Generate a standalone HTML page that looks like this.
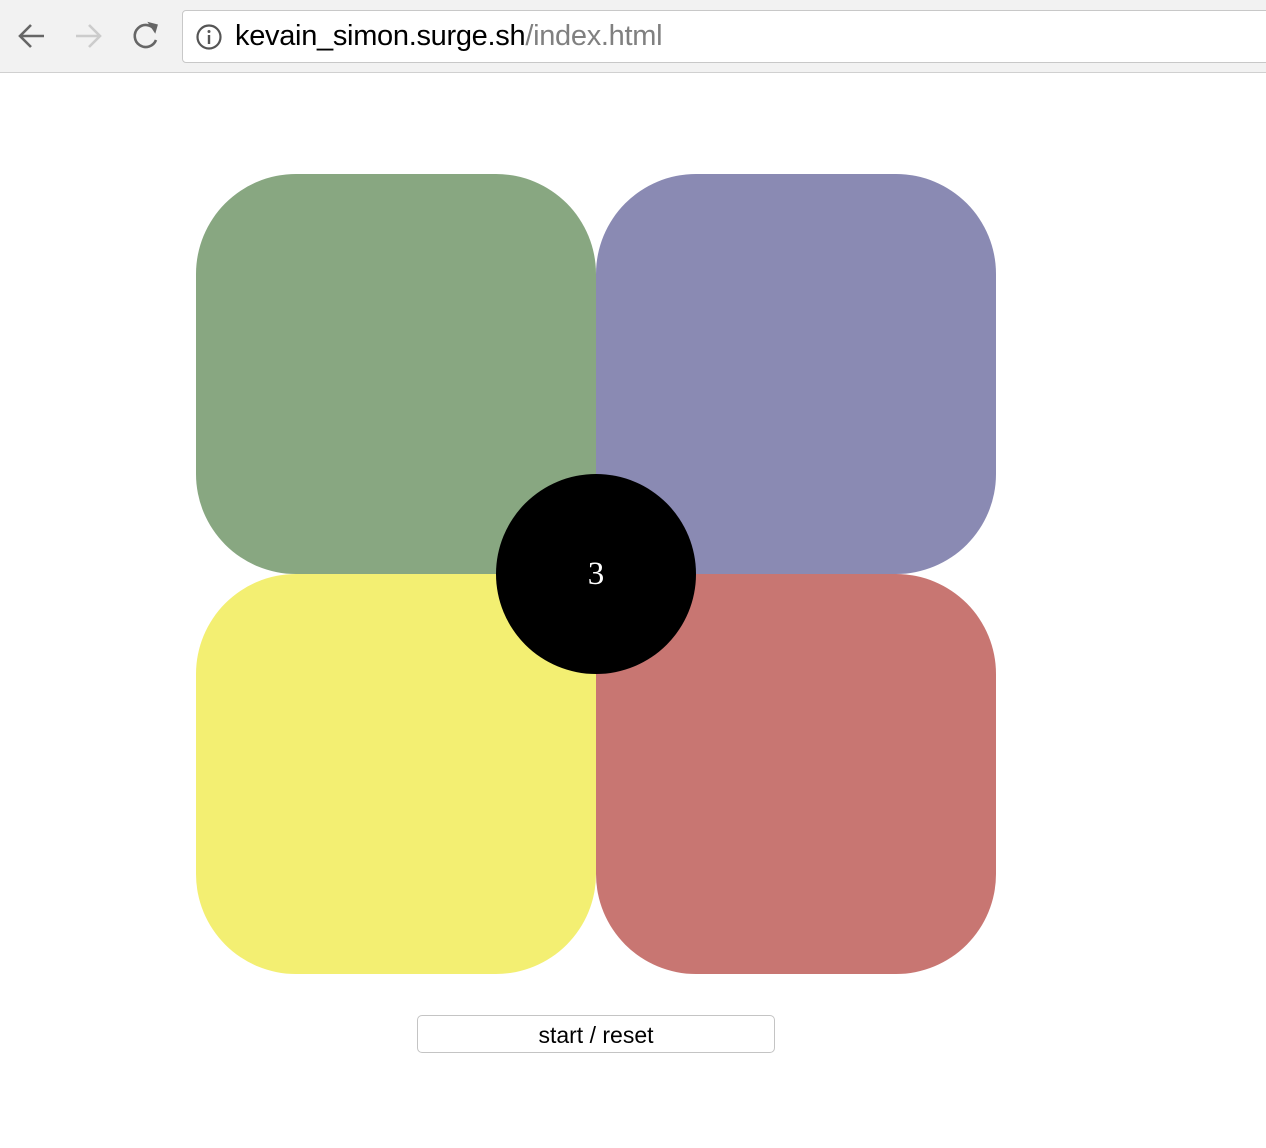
<!DOCTYPE html>
<html><head><style>
body{margin:0;width:1266px;height:1148px;background:#fff;position:relative;overflow:hidden;font-family:"Liberation Sans",sans-serif}
.bar{position:absolute;left:0;top:0;width:1266px;height:72px;background:#f2f2f2;border-bottom:1px solid #d0d0d0}
.url{position:absolute;left:182px;top:10px;width:1100px;height:51px;background:#fff;border:1px solid #c8c8c8;border-radius:4px}
.url span{position:absolute;left:52px;top:9px;font-size:29px;color:#000;letter-spacing:-0.3px}
.q{position:absolute;width:400px;height:400px}
.c{position:absolute;left:496px;top:474px;width:200px;height:200px;border-radius:50%;background:#000;color:#fff;font-family:"Liberation Serif",serif;font-size:33px;text-align:center;line-height:200px}
.btn{position:absolute;left:417px;top:1015px;width:356px;height:36px;border:1px solid #c4c4c4;border-radius:5px;background:#fff;text-align:center;line-height:38px;font-size:23px}
</style></head><body>
<div class="bar">
<svg width="180" height="72" style="position:absolute;left:0;top:0" fill="none" stroke-width="2.6">
<path d="M44 36H20M31 25L20 36L31 47" stroke="#666"/>
<path d="M76 36H100M89 25L100 36L89 47" stroke="#ccc"/>
<path d="M155 30A11 11 0 1 0 156 40" stroke="#666"/>
<path d="M149 23L157 25L155 32Z" fill="#666" stroke="#666" stroke-width="1.5"/>
</svg>
<div class="url">
<svg width="30" height="30" style="position:absolute;left:12px;top:12px"><circle cx="14" cy="14" r="11.5" fill="none" stroke="#555" stroke-width="2.2"/><rect x="12.8" y="12" width="2.4" height="9" fill="#555"/><circle cx="14" cy="8.5" r="1.5" fill="#555"/></svg>
<span>kevain_simon.surge.sh<span style="position:static;color:#808080">/index.html</span></span>
</div>
</div>
<div class="q" style="left:196px;top:174px;background:#88a781;border-radius:100px 100px 0 100px"></div>
<div class="q" style="left:596px;top:174px;background:#8a8ab3;border-radius:100px 100px 100px 0"></div>
<div class="q" style="left:196px;top:574px;background:#f3ef72;border-radius:100px 0 100px 100px"></div>
<div class="q" style="left:596px;top:574px;background:#c87672;border-radius:0 100px 100px 100px"></div>
<div class="c">3</div>
<div class="btn">start / reset</div>
</body></html>
